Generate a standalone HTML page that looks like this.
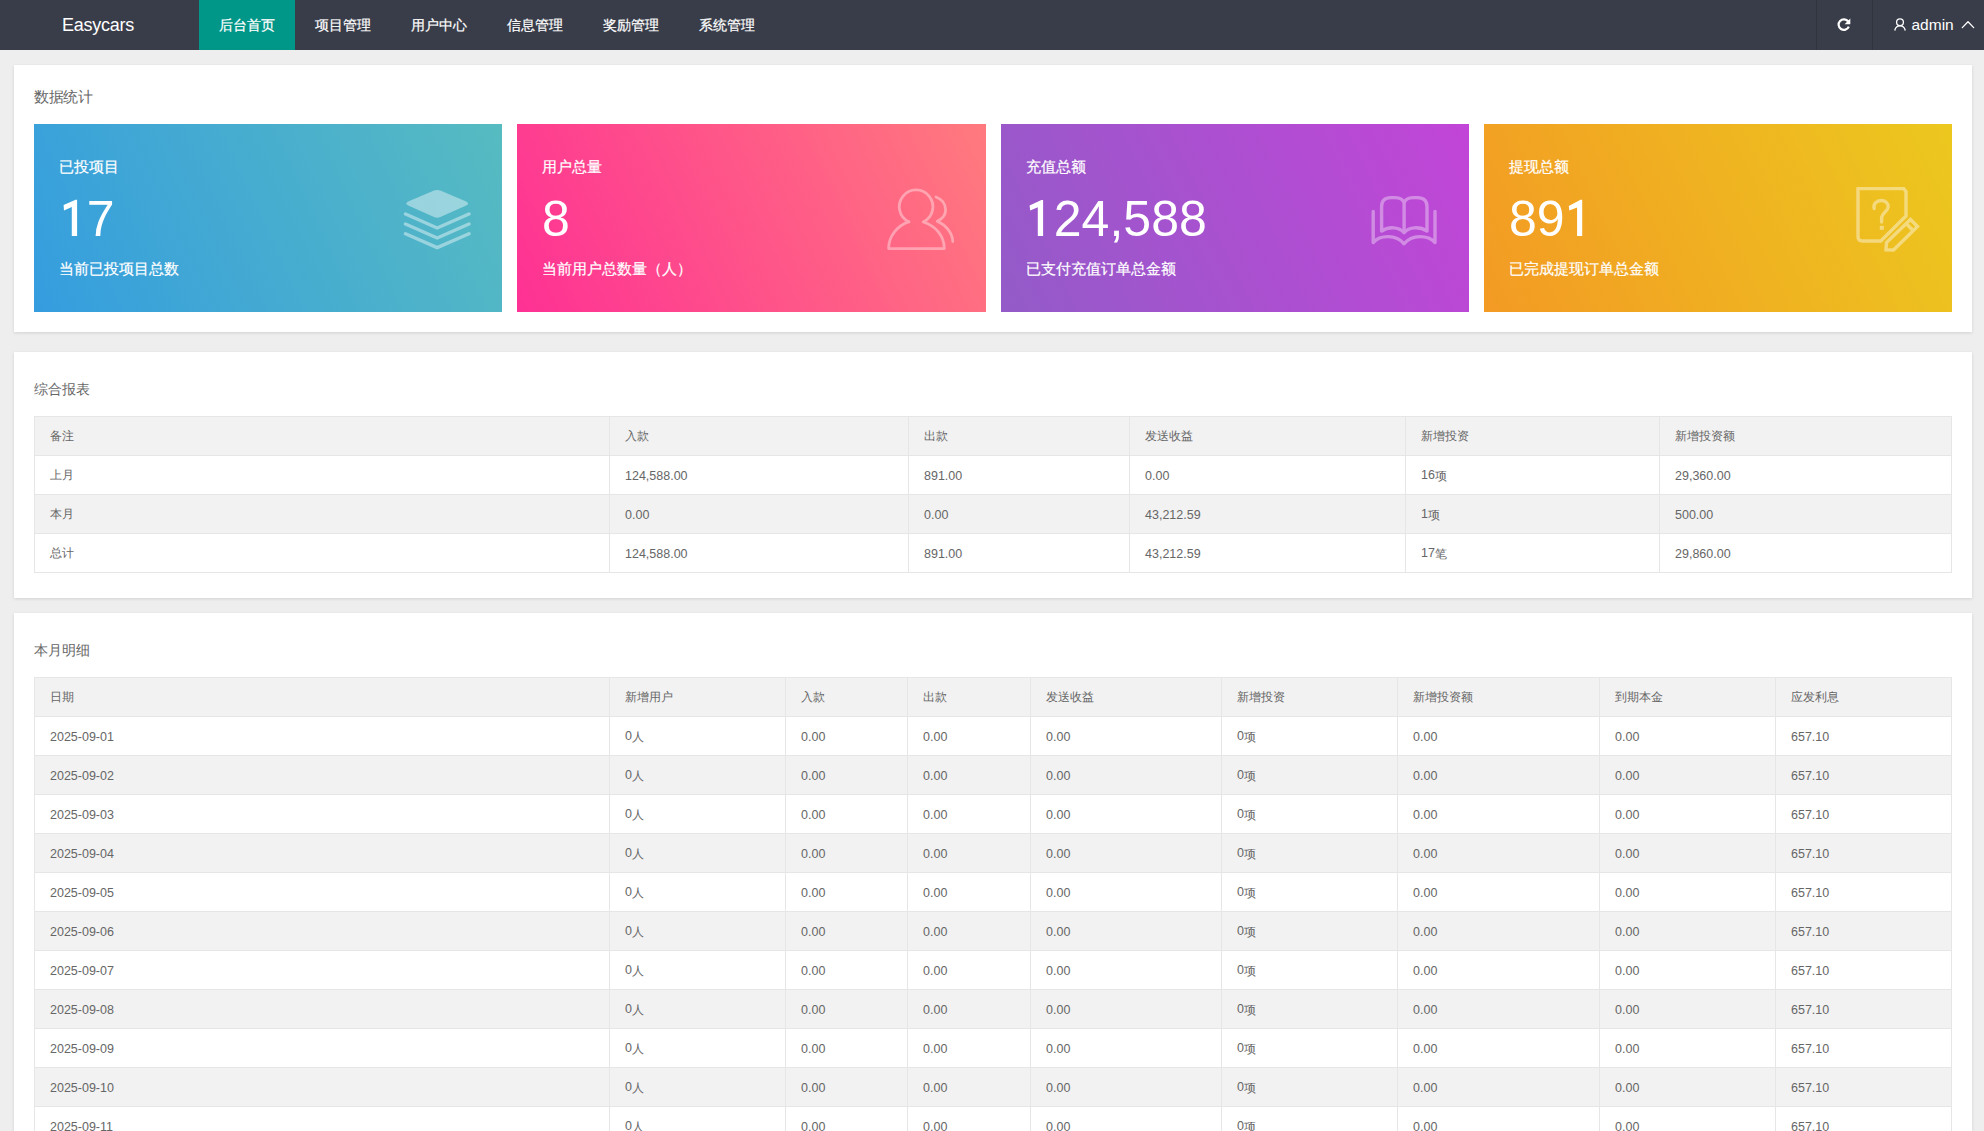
<!DOCTYPE html>
<html><head><meta charset="utf-8">
<style>
*{margin:0;padding:0;box-sizing:border-box}
html,body{width:1984px;height:1131px;overflow:hidden}
body{background:#eeeeee;font-family:"Liberation Sans",sans-serif;color:#666;position:relative}
.hdr{position:absolute;left:0;top:0;width:1984px;height:50px;background:#393d49}
.logo{position:absolute;left:62px;top:12.5px;font-size:18px;line-height:24px;color:#fff;letter-spacing:-0.25px}
.nav{position:absolute;top:0;height:50px;width:96px;font-size:14px;line-height:50px;color:#fff;text-align:center;-webkit-text-stroke:0.2px #fff}
.nav.on{background:#009688}
.sep{position:absolute;top:0;width:1px;height:50px;background:#30343e}
.admin{position:absolute;left:1911.5px;top:16px;font-size:15.5px;line-height:18px;color:#fff}
.panel{position:absolute;left:14px;width:1958px;background:#fff;box-shadow:0 1px 3px rgba(0,0,0,.12)}
.ptitle{position:absolute;left:20px;font-size:14px;line-height:20px;color:#666}
.card{position:absolute;top:59px;width:468px;height:188px;color:#fff}
.card .t{position:absolute;left:25px;top:33px;font-size:15px;line-height:20px;-webkit-text-stroke:0.2px #fff}
.card .n{position:absolute;left:25px;top:67px;font-size:50px;line-height:56px}
.card .s{position:absolute;left:25px;top:135px;font-size:15px;line-height:20px;-webkit-text-stroke:0.2px #fff}
table{position:absolute;left:20px;border-collapse:collapse;table-layout:fixed;font-size:12.5px;color:#666}
td,th{border:1px solid #e6e6e6;height:39px;padding:1px 15px 0;text-align:left;font-weight:normal;white-space:nowrap}
tr.g td,tr.g th{background:#f2f2f2}
th,.c{font-size:12px}
td span.c{position:relative;top:1px}
svg.ov{position:absolute;left:0;top:0}
.one{color:transparent}
</style></head><body>
<div class="hdr">
  <div class="logo">Easycars</div>
  <div class="nav on" style="left:199px">后台首页</div>
  <div class="nav" style="left:295px">项目管理</div>
  <div class="nav" style="left:391px">用户中心</div>
  <div class="nav" style="left:487px">信息管理</div>
  <div class="nav" style="left:583px">奖励管理</div>
  <div class="nav" style="left:679px">系统管理</div>
  <div class="sep" style="left:1816px"></div>
  <div class="sep" style="left:1872px"></div>
  <div class="admin">admin</div>
</div>

<div class="panel" style="top:65px;height:267px">
  <div class="ptitle" style="top:22px;font-size:15px;letter-spacing:-0.4px">数据统计</div>
  <div class="card" style="left:20px;background:linear-gradient(65deg,#359ddf,#57bbc1)">
    <div class="t">已投项目</div><div class="n"><span class="one">1</span>7</div><div class="s">当前已投项目总数</div>
  </div>
  <div class="card" style="left:503px;width:469px;background:linear-gradient(65deg,#fe3194,#ff7a7e)">
    <div class="t">用户总量</div><div class="n">8</div><div class="s">当前用户总数量（人）</div>
  </div>
  <div class="card" style="left:987px;background:linear-gradient(65deg,#935bc8,#c245d8)">
    <div class="t">充值总额</div><div class="n"><span class="one">1</span>24,588</div><div class="s">已支付充值订单总金额</div>
  </div>
  <div class="card" style="left:1470px;background:linear-gradient(65deg,#f39a24,#ecc81e)">
    <div class="t">提现总额</div><div class="n">89<span class="one">1</span></div><div class="s">已完成提现订单总金额</div>
  </div>
</div>

<div class="panel" style="top:352px;height:246px">
  <div class="ptitle" style="top:27px">综合报表</div>
  <table style="top:64px;width:1918px">
    <colgroup><col style="width:575px"><col style="width:299px"><col style="width:221px"><col style="width:276px"><col style="width:254px"><col style="width:292px"></colgroup>
    <tr class="g"><th>备注</th><th>入款</th><th>出款</th><th>发送收益</th><th>新增投资</th><th>新增投资额</th></tr>
    <tr><td class="c">上月</td><td>124,588.00</td><td>891.00</td><td>0.00</td><td>16<span class="c">项</span></td><td>29,360.00</td></tr>
    <tr class="g"><td class="c">本月</td><td>0.00</td><td>0.00</td><td>43,212.59</td><td>1<span class="c">项</span></td><td>500.00</td></tr>
    <tr><td class="c">总计</td><td>124,588.00</td><td>891.00</td><td>43,212.59</td><td>17<span class="c">笔</span></td><td>29,860.00</td></tr>
  </table>
</div>

<div class="panel" style="top:613px;height:600px">
  <div class="ptitle" style="top:27px">本月明细</div>
  <table style="top:64px;width:1918px">
    <colgroup><col style="width:575px"><col style="width:176px"><col style="width:122px"><col style="width:123px"><col style="width:191px"><col style="width:176px"><col style="width:202px"><col style="width:176px"><col style="width:176px"></colgroup>
    <tr class="g"><th>日期</th><th>新增用户</th><th>入款</th><th>出款</th><th>发送收益</th><th>新增投资</th><th>新增投资额</th><th>到期本金</th><th>应发利息</th></tr>
<tr><td>2025-09-01</td><td>0<span class="c">人</span></td><td>0.00</td><td>0.00</td><td>0.00</td><td>0<span class="c">项</span></td><td>0.00</td><td>0.00</td><td>657.10</td></tr>
<tr class="g"><td>2025-09-02</td><td>0<span class="c">人</span></td><td>0.00</td><td>0.00</td><td>0.00</td><td>0<span class="c">项</span></td><td>0.00</td><td>0.00</td><td>657.10</td></tr>
<tr><td>2025-09-03</td><td>0<span class="c">人</span></td><td>0.00</td><td>0.00</td><td>0.00</td><td>0<span class="c">项</span></td><td>0.00</td><td>0.00</td><td>657.10</td></tr>
<tr class="g"><td>2025-09-04</td><td>0<span class="c">人</span></td><td>0.00</td><td>0.00</td><td>0.00</td><td>0<span class="c">项</span></td><td>0.00</td><td>0.00</td><td>657.10</td></tr>
<tr><td>2025-09-05</td><td>0<span class="c">人</span></td><td>0.00</td><td>0.00</td><td>0.00</td><td>0<span class="c">项</span></td><td>0.00</td><td>0.00</td><td>657.10</td></tr>
<tr class="g"><td>2025-09-06</td><td>0<span class="c">人</span></td><td>0.00</td><td>0.00</td><td>0.00</td><td>0<span class="c">项</span></td><td>0.00</td><td>0.00</td><td>657.10</td></tr>
<tr><td>2025-09-07</td><td>0<span class="c">人</span></td><td>0.00</td><td>0.00</td><td>0.00</td><td>0<span class="c">项</span></td><td>0.00</td><td>0.00</td><td>657.10</td></tr>
<tr class="g"><td>2025-09-08</td><td>0<span class="c">人</span></td><td>0.00</td><td>0.00</td><td>0.00</td><td>0<span class="c">项</span></td><td>0.00</td><td>0.00</td><td>657.10</td></tr>
<tr><td>2025-09-09</td><td>0<span class="c">人</span></td><td>0.00</td><td>0.00</td><td>0.00</td><td>0<span class="c">项</span></td><td>0.00</td><td>0.00</td><td>657.10</td></tr>
<tr class="g"><td>2025-09-10</td><td>0<span class="c">人</span></td><td>0.00</td><td>0.00</td><td>0.00</td><td>0<span class="c">项</span></td><td>0.00</td><td>0.00</td><td>657.10</td></tr>
<tr><td>2025-09-11</td><td>0<span class="c">人</span></td><td>0.00</td><td>0.00</td><td>0.00</td><td>0<span class="c">项</span></td><td>0.00</td><td>0.00</td><td>657.10</td></tr>
  </table>
</div>

<svg class="ov" width="1984" height="1131" viewBox="0 0 1984 1131" fill="none" stroke-linecap="round" stroke-linejoin="round">
  <!-- big ones -->
  <g fill="#fff" stroke="none">
    <path d="M63.6,205 L75.6,199.8 L77.1,199.8 L77.1,236 L71.8,236 L71.8,207 L64,210.4 Z"/>
    <path d="M1029.6,205.6 L1041.4,199.9 L1043.1,199.9 L1043.1,236 L1037.8,236 L1037.8,207.3 L1030.2,210.6 Z"/>
    <path d="M1568.8,206 L1580.5,199.8 L1582.2,199.8 L1582.2,236 L1577.1,236 L1577.1,207.6 L1569.3,210.6 Z"/>
  </g>
  <!-- header refresh -->
  <path d="M1848.8,26.6 A5.3,5.3 0 1 1 1848.2,21.5" stroke="#fff" stroke-width="2.2" stroke-linecap="butt"/>
  <path d="M1850.3,18.5 L1850.3,24.2 L1844.6,24.2 Z" fill="#fff"/>
  <!-- user icon -->
  <g stroke="#fff" stroke-width="1.3">
    <circle cx="1900" cy="22.3" r="3.4"/>
    <path d="M1894.9,30 A5.2,5.2 0 0 1 1905.1,30"/>
    <path d="M1962.3,27.6 L1968,21.8 L1973.7,27.6"/>
  </g>
  <!-- layers -->
  <g fill="#fff" fill-opacity=".42" stroke="none">
    <path d="M434,190.6 Q437.2,189.2 440.4,190.6 L466.2,201.6 Q470,203.6 466.2,205.6 L440.4,217 Q437.2,218.4 434,217 L408.2,205.6 Q404.4,203.6 408.2,201.6 Z"/>
  </g>
  <g stroke="#fff" opacity=".42" stroke-width="3.4">
    <path d="M405.5,214 L437.2,228 L469,214"/>
    <path d="M405.5,224 L437.2,238 L469,224"/>
    <path d="M405.5,233.8 L437.2,247.6 L469,233.8"/>
  </g>
  <!-- users -->
  <g stroke="#fff" opacity=".38" stroke-width="2.8">
    <path d="M909,222 A16.8,16.8 0 1 1 923.2,222 C936,226 944.3,236 944.3,248.6 L888.6,248.6 C888.6,236 897,226 909,221.6 Z"/>
    <path d="M936,197 C942.5,199.5 945.6,204.5 945.6,210 C945.6,215 942,219 937.2,221.3 C946,225 952.5,233 952.8,241.5"/>
  </g>
  <!-- book -->
  <g stroke="#fff" opacity=".36" stroke-width="3.4">
    <path d="M1373.2,211.5 L1373.2,242.5 C1380,235 1396,234 1404.1,243.8 C1412,234 1428,235 1435,242.5 L1435,211.5"/>
    <path d="M1381.6,231 L1381.6,206.5 Q1381.6,197.6 1391,197.6 L1395,197.6 Q1402.5,197.6 1404.1,203 Q1405.7,197.6 1413.2,197.6 L1417.2,197.6 Q1427,197.6 1427,206.5 L1427,231 C1420,226.5 1409,226.5 1404.1,232.6 C1399,226.5 1388,226.5 1381.6,231 Z M1404.1,203 L1404.1,232"/>
  </g>
  <!-- survey -->
  <g stroke="#fff" opacity=".42" stroke-width="3.4" stroke-linecap="butt" stroke-linejoin="miter">
    <path d="M1880.8,241 L1862.5,241 Q1858,241 1858,236.5 L1858,188.6 L1903.8,188.6 L1906,191.5 L1906,216 Z"/>
    <path d="M1874.2,208.5 C1873,204 1876.5,200.5 1881.2,200.5 C1885.5,200.5 1888.5,203.5 1888.2,207 C1888,211 1882,213 1881.6,218 L1881.6,222" stroke-linecap="round"/>
    <path d="M1910.5,219.5 L1917.5,226.5 L1893.5,250 L1886,249.8 L1886.5,242.5 Z"/>
    <path d="M1906.6,224 L1913,230.5"/>
  </g>
  <rect x="1879.8" y="225.8" width="4" height="4" fill="#fff" fill-opacity=".42"/>
</svg>
</body></html>
